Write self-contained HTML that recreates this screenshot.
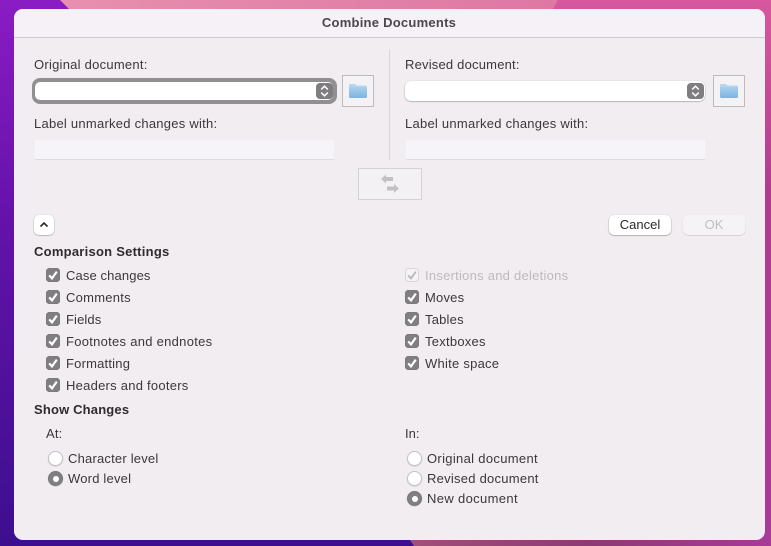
<!DOCTYPE html>
<html><head><meta charset="utf-8">
<style>
html,body{margin:0;padding:0;width:771px;height:546px;overflow:hidden;background:#4a109c}
body{position:relative;font-family:"Liberation Sans",sans-serif;font-size:13px;color:#3a383b}
.a{position:absolute}
.t{position:absolute;white-space:nowrap;line-height:16px;letter-spacing:.2px}
.w{letter-spacing:.25px}
.n{letter-spacing:.12px}
.b{font-weight:bold;color:#2e2c2f;letter-spacing:.25px}
.cb{position:absolute;width:14px;height:14px;border-radius:3.5px;background:#807e80;box-shadow:inset 0 0 0 .5px #777}
.cb svg{position:absolute;left:0;top:0}
.r{position:absolute;width:13px;height:13px;border-radius:50%;background:#fff;border:.5px solid #c6c3c6;box-shadow:0 .5px 1px rgba(0,0,0,.2)}
.r.on{background:#827f82;border-color:#777}
.r.on:after{content:"";position:absolute;left:3.5px;top:3.5px;width:6px;height:6px;border-radius:50%;background:#fff}
.tf{position:absolute;height:20px;width:299px;background:#f6f4f8;border-bottom:1px solid #dedbdf;box-sizing:border-box}
.fb{position:absolute;width:32px;height:32px;box-sizing:border-box;border:1px solid #bdbbbe;background:#f5f2f6}
.st{position:absolute;width:17px;height:16px;border-radius:4px;background:#7f7d7f}
</style></head><body>
<svg class="a" style="left:0;top:0" width="771" height="546">
<defs>
<linearGradient id="p" x1="0" y1="0" x2="0" y2="1"><stop offset="0" stop-color="#8a1cc4"/><stop offset=".4" stop-color="#6412aa"/><stop offset="1" stop-color="#3c0f8e"/></linearGradient>
<linearGradient id="k" x1="0" y1="0" x2="1" y2="0"><stop offset="0" stop-color="#e88fae"/><stop offset="1" stop-color="#dd78a4"/></linearGradient>
<linearGradient id="m" x1="0" y1="0" x2="0" y2="1"><stop offset="0" stop-color="#d8589e"/><stop offset=".35" stop-color="#b03c90"/><stop offset="1" stop-color="#a83a98"/></linearGradient>
<linearGradient id="v" x1="0" y1="0" x2="1" y2="0"><stop offset="0" stop-color="#a05078"/><stop offset=".5" stop-color="#8c3a74"/><stop offset="1" stop-color="#a83a98"/></linearGradient>
<linearGradient id="f" x1="0" y1="0" x2="0" y2="1"><stop offset="0" stop-color="#a9d0ee"/><stop offset="1" stop-color="#7db3df"/></linearGradient>
</defs>
<rect width="771" height="546" fill="url(#p)"/>
<polygon points="60,0 558,0 553,10 70,10" fill="url(#k)"/>
<polygon points="558,0 771,0 771,546 700,546 700,9 553,9" fill="url(#m)"/>
<polygon points="410,540 771,540 771,546 414,546" fill="url(#v)"/>
</svg>
<div class="a" style="left:14px;top:9px;width:751px;height:531px;border-radius:9px;background:#f2edf1;overflow:hidden">
<div class="a" style="left:0;top:0;width:751px;height:28px;background:#f6f0f7;border-bottom:1px solid #cfcbcf"></div>
</div>
<div class="t b" style="left:0;width:778px;top:15px;text-align:center;color:#4a484b">Combine Documents</div>

<div class="a" style="left:389px;top:49px;width:1px;height:111px;background:#d9d6da"></div>

<div class="t w" style="left:34px;top:57px">Original document:</div>
<div class="a" style="left:32px;top:78px;width:305px;height:26px;border-radius:8px;background:#918f92"></div>
<div class="a" style="left:35px;top:82px;width:298px;height:18px;border-radius:5px;background:#fff"></div>
<div class="st" style="left:316px;top:83px"><svg width="17" height="16"><path d="M5.2 6.4 8.5 3.2 11.8 6.4M5.2 9.6 8.5 12.8 11.8 9.6" fill="none" stroke="#fff" stroke-width="1.5"/></svg></div>
<div class="fb" style="left:342px;top:75px"><svg width="30" height="30"><path d="M6 9Q6 8 7 8H12L13.5 9.5H23Q24 9.5 24 10.5V12H6Z" fill="#b5d6f0"/><path d="M6 11H24V20.5Q24 22 22.5 22H7.5Q6 22 6 20.5Z" fill="url(#f)"/></svg></div>
<div class="t w" style="left:34px;top:116px">Label unmarked changes with:</div>
<div class="tf" style="left:35px;top:140px"></div>

<div class="t" style="left:405px;top:57px">Revised document:</div>
<div class="a" style="left:405px;top:81px;width:300px;height:20px;border-radius:6px;background:#fff;box-shadow:0 .5px 1.5px rgba(0,0,0,.4)"></div>
<div class="st" style="left:687px;top:83px"><svg width="17" height="16"><path d="M5.2 6.4 8.5 3.2 11.8 6.4M5.2 9.6 8.5 12.8 11.8 9.6" fill="none" stroke="#fff" stroke-width="1.5"/></svg></div>
<div class="fb" style="left:713px;top:75px"><svg width="30" height="30"><path d="M6 9Q6 8 7 8H12L13.5 9.5H23Q24 9.5 24 10.5V12H6Z" fill="#b5d6f0"/><path d="M6 11H24V20.5Q24 22 22.5 22H7.5Q6 22 6 20.5Z" fill="url(#f)"/></svg></div>
<div class="t w" style="left:405px;top:116px">Label unmarked changes with:</div>
<div class="tf" style="left:406px;top:140px"></div>

<div class="a" style="left:358px;top:168px;width:64px;height:32px;box-sizing:border-box;border:1px solid #d6d3d7;background:#f4f1f5">
<svg width="62" height="30"><path d="M22 10 27 5.5V8H34V12H27V14.5ZM40 19.5 35 15V17.5H28V21.5H35V24Z" fill="#c4c1c5"/></svg></div>

<div class="a" style="left:34px;top:215px;width:20px;height:20px;border-radius:5px;background:#fff;box-shadow:0 .5px 1.5px rgba(0,0,0,.4)"><svg width="20" height="20"><path d="M6.5 11.5 10 8 13.5 11.5" fill="none" stroke="#2c2a2d" stroke-width="1.6"/></svg></div>
<div class="a" style="left:609px;top:215px;width:62px;height:20px;border-radius:5px;background:#fff;box-shadow:0 .5px 1.5px rgba(0,0,0,.45);text-align:center;line-height:19px;color:#2b292c;letter-spacing:0">Cancel</div>
<div class="a" style="left:683px;top:215px;width:62px;height:20px;border-radius:5px;background:#f6f3f7;box-shadow:0 .5px 1px rgba(0,0,0,.2);text-align:center;line-height:19px;color:#c0bdc1">OK</div>

<div class="t b" style="left:34px;top:244px">Comparison Settings</div>

<div class="cb" style="left:46px;top:268px"><svg width="14" height="14"><path d="M3.2 7.4 6 10.4 10.8 3.6" fill="none" stroke="#fff" stroke-width="2.2"/></svg></div><div class="t n" style="left:66px;top:268px">Case changes</div>
<div class="cb" style="left:46px;top:290px"><svg width="14" height="14"><path d="M3.2 7.4 6 10.4 10.8 3.6" fill="none" stroke="#fff" stroke-width="2.2"/></svg></div><div class="t w" style="left:66px;top:290px">Comments</div>
<div class="cb" style="left:46px;top:312px"><svg width="14" height="14"><path d="M3.2 7.4 6 10.4 10.8 3.6" fill="none" stroke="#fff" stroke-width="2.2"/></svg></div><div class="t n" style="left:66px;top:312px">Fields</div>
<div class="cb" style="left:46px;top:334px"><svg width="14" height="14"><path d="M3.2 7.4 6 10.4 10.8 3.6" fill="none" stroke="#fff" stroke-width="2.2"/></svg></div><div class="t" style="left:66px;top:334px;letter-spacing:.28px">Footnotes and endnotes</div>
<div class="cb" style="left:46px;top:356px"><svg width="14" height="14"><path d="M3.2 7.4 6 10.4 10.8 3.6" fill="none" stroke="#fff" stroke-width="2.2"/></svg></div><div class="t" style="left:66px;top:356px">Formatting</div>
<div class="cb" style="left:46px;top:378px"><svg width="14" height="14"><path d="M3.2 7.4 6 10.4 10.8 3.6" fill="none" stroke="#fff" stroke-width="2.2"/></svg></div><div class="t w" style="left:66px;top:378px">Headers and footers</div>

<div class="cb" style="left:405px;top:268px;background:#f6f3f7;box-shadow:inset 0 0 0 1px #d8d5d9"><svg width="14" height="14"><path d="M3.2 7.4 6 10.4 10.8 3.6" fill="none" stroke="#b9b6ba" stroke-width="1.8"/></svg></div><div class="t w" style="left:425px;top:268px;color:#bdbabe">Insertions and deletions</div>
<div class="cb" style="left:405px;top:290px"><svg width="14" height="14"><path d="M3.2 7.4 6 10.4 10.8 3.6" fill="none" stroke="#fff" stroke-width="2.2"/></svg></div><div class="t" style="left:425px;top:290px">Moves</div>
<div class="cb" style="left:405px;top:312px"><svg width="14" height="14"><path d="M3.2 7.4 6 10.4 10.8 3.6" fill="none" stroke="#fff" stroke-width="2.2"/></svg></div><div class="t" style="left:425px;top:312px">Tables</div>
<div class="cb" style="left:405px;top:334px"><svg width="14" height="14"><path d="M3.2 7.4 6 10.4 10.8 3.6" fill="none" stroke="#fff" stroke-width="2.2"/></svg></div><div class="t w" style="left:425px;top:334px">Textboxes</div>
<div class="cb" style="left:405px;top:356px"><svg width="14" height="14"><path d="M3.2 7.4 6 10.4 10.8 3.6" fill="none" stroke="#fff" stroke-width="2.2"/></svg></div><div class="t w" style="left:425px;top:356px">White space</div>

<div class="t b" style="left:34px;top:402px;letter-spacing:.17px">Show Changes</div>
<div class="t" style="left:46px;top:426px">At:</div>
<div class="r" style="left:48px;top:451px"></div><div class="t" style="left:68px;top:451px">Character level</div>
<div class="r on" style="left:48px;top:471px"></div><div class="t" style="left:68px;top:471px">Word level</div>

<div class="t" style="left:405px;top:426px;letter-spacing:0">In:</div>
<div class="r" style="left:407px;top:451px"></div><div class="t" style="left:427px;top:451px;letter-spacing:.32px">Original document</div>
<div class="r" style="left:407px;top:471px"></div><div class="t w" style="left:427px;top:471px">Revised document</div>
<div class="r on" style="left:407px;top:491px"></div><div class="t" style="left:427px;top:491px;letter-spacing:.35px">New document</div>
</body></html>
